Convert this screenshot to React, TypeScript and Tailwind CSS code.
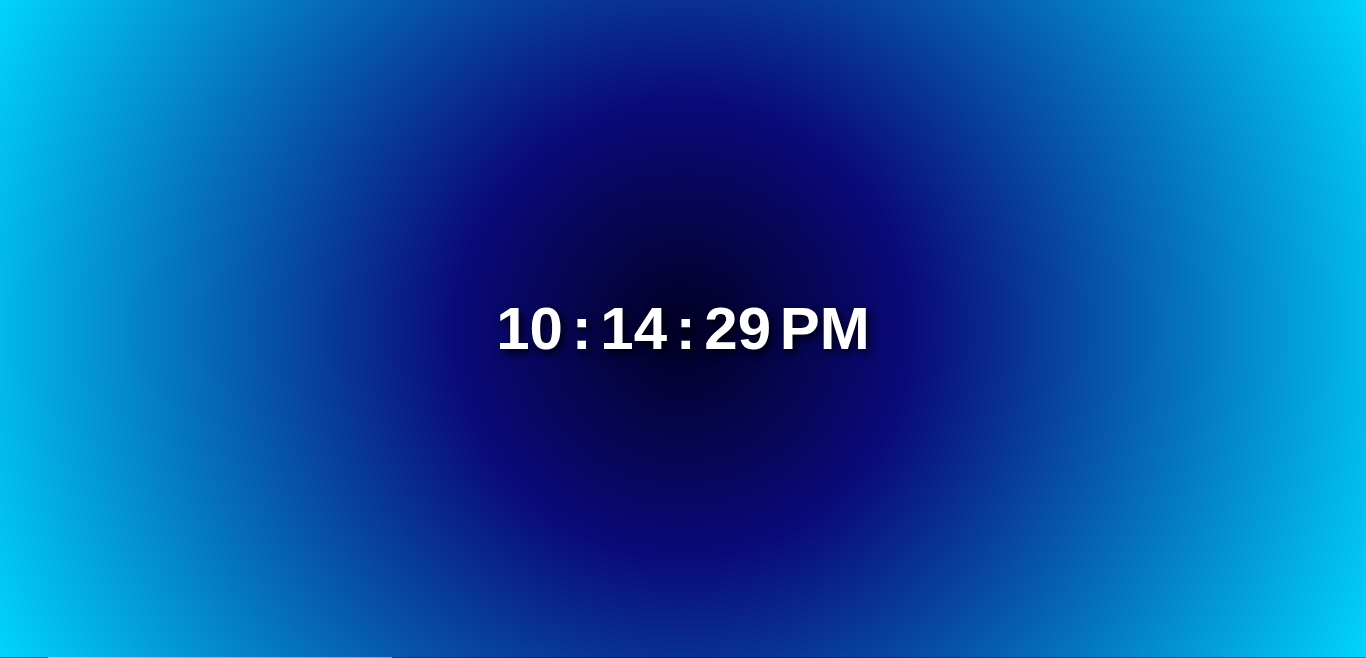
import React from "react";

export default function App() {
  return (
    <div className="relative w-full h-[658px] overflow-hidden flex items-center justify-center">
      <div className="absolute inset-0 bg-[radial-gradient(circle_at_center,#020024_0%,#0a0a7a_30%,#00d4ff_100%)]" />
      <div
        className="relative text-white font-bold text-[60px] leading-none [word-spacing:-8px] [text-shadow:3px_4px_8px_rgba(0,0,0,0.9)]"
        style={{ fontFamily: '"Liberation Sans", Arial, sans-serif' }}
      >
        10 : 14 : 29 PM
      </div>
      <div className="absolute left-0 right-0 bottom-0 h-px flex">
        <div className="w-[48px] h-px bg-black/30" />
        <div className="w-[344px] h-px bg-white/45" />
        <div className="flex-1 h-px bg-black/30" />
      </div>
    </div>
  );
}
